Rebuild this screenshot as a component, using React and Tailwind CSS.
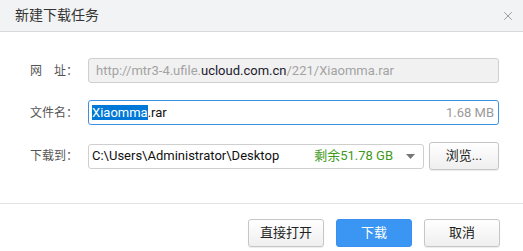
import { X } from "lucide-react";

const font = { fontFamily: 'Roboto, "Noto Sans CJK SC", sans-serif' };

const Label = ({ children }) => (
	<div className="w-[58px] pl-[30px] box-content shrink-0 text-[12px] text-[#555] whitespace-nowrap">{children}</div>
);

const GrayButton = ({ children, className = "" }) => (
	<button
		className={`h-[28px] flex items-center justify-center rounded-[3px] border border-[#c6c6c6] bg-gradient-to-b from-white to-[#efefef] text-[13px] text-[#222] shadow-[0_1px_1px_rgba(0,0,0,0.08)] ${className}`}
	>
		{children}
	</button>
);

export default function App() {
	return (
		<div className="w-[523px] h-[251px] bg-white flex flex-col overflow-hidden" style={font}>
			{/* Title bar */}
			<div className="h-[32px] shrink-0 bg-[#f2f3f5] border-b border-[#d9d9d9] flex items-center justify-between pl-[15px] pr-[8px]">
				<span className="text-[14px] text-[#333]">新建下载任务</span>
				<X size={14} strokeWidth={1.2} className="text-[#777]" />
			</div>

			{/* Form */}
			<div className="flex flex-col gap-[17px] pt-[26px] pr-[24px]">
				<div className="flex items-center">
					<Label>网　址：</Label>
					<div className="flex-1 h-[25px] flex items-center rounded-[3px] border border-[#cfcfcf] bg-[#f1f1f1] px-[7px] text-[13px] text-[#a3a3a3] whitespace-nowrap overflow-hidden">
						http://mtr3-4.ufile.<span className="text-[#1a1a2e]">ucloud.com.cn</span>/221/Xiaomma.rar
					</div>
				</div>

				<div className="flex items-center">
					<Label>文件名：</Label>
					<div className="flex-1 h-[25px] flex items-center justify-between rounded-[3px] border border-[#3d8fe6] bg-white pl-[3px] pr-[4px] text-[13px] whitespace-nowrap">
						<span className="text-[#111]">
							<span className="bg-[#0078d7] text-white">Xiaomma</span>.rar
						</span>
						<span className="text-[#9a9a9a]">1.68 MB</span>
					</div>
				</div>

				<div className="flex items-center">
					<Label>下载到：</Label>
					<div className="flex-1 h-[25px] flex items-center rounded-[3px] border border-[#cfcfcf] bg-white pl-[3px] pr-[8px] text-[13px] whitespace-nowrap">
						<span className="flex-1 text-[#111]">C:\Users\Administrator\Desktop</span>
						<span className="text-[#3e9a1c]">剩余51.78 GB</span>
						<svg width="9" height="5" viewBox="0 0 9 5" className="ml-[13px]">
							<path d="M0 0h9L4.5 5z" fill="#777" />
						</svg>
					</div>
					<GrayButton className="ml-[5px] w-[70px] h-[25px]">浏览...</GrayButton>
				</div>
			</div>

			{/* Footer */}
			<div className="mt-[33px] border-t border-[#e3e3e3] flex justify-end gap-[12px] pt-[15px] pr-[23px]">
				<GrayButton className="w-[76px]">直接打开</GrayButton>
				<button className="w-[76px] h-[28px] flex items-center justify-center rounded-[3px] border border-[#3a8ff0] bg-[#3b95f2] text-[13px] text-white">
					下载
				</button>
				<GrayButton className="w-[76px]">取消</GrayButton>
			</div>
		</div>
	);
}
